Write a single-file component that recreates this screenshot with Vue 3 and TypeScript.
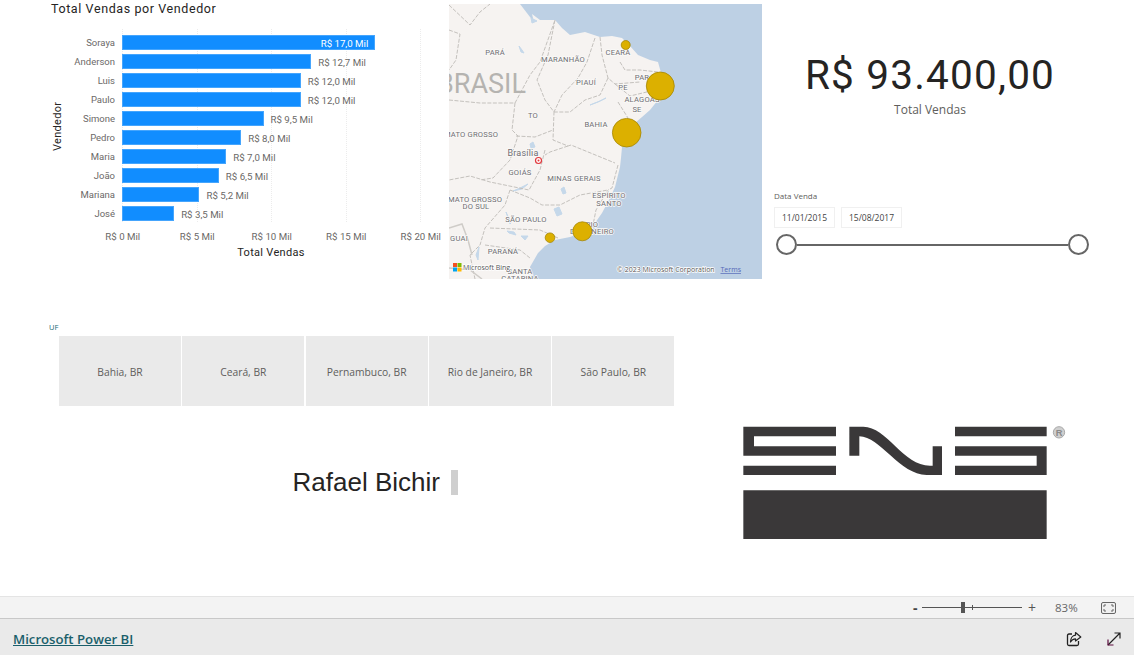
<script setup lang="ts">
interface Seller { name: string; value: number; label: string; inside?: boolean }
const sellers: Seller[] = [
  { name: 'Soraya', value: 17, label: 'R$ 17,0 Mil', inside: true },
  { name: 'Anderson', value: 12.7, label: 'R$ 12,7 Mil' },
  { name: 'Luis', value: 12, label: 'R$ 12,0 Mil' },
  { name: 'Paulo', value: 12, label: 'R$ 12,0 Mil' },
  { name: 'Simone', value: 9.5, label: 'R$ 9,5 Mil' },
  { name: 'Pedro', value: 8, label: 'R$ 8,0 Mil' },
  { name: 'Maria', value: 7, label: 'R$ 7,0 Mil' },
  { name: 'João', value: 6.5, label: 'R$ 6,5 Mil' },
  { name: 'Mariana', value: 5.2, label: 'R$ 5,2 Mil' },
  { name: 'José', value: 3.5, label: 'R$ 3,5 Mil' }
]
const ticks = ['R$ 0 Mil', 'R$ 5 Mil', 'R$ 10 Mil', 'R$ 15 Mil', 'R$ 20 Mil']
const states = ['Bahia, BR', 'Ceará, BR', 'Pernambuco, BR', 'Rio de Janeiro, BR', 'São Paulo, BR']
const mapLabels: { t: string; x: number; y: number; s?: number }[] = [
  { t: 'PARÁ', x: 495, y: 55 }, { t: 'MARANHÃO', x: 563, y: 62 }, { t: 'CEARÁ', x: 618, y: 55 },
  { t: 'PIAUÍ', x: 586, y: 85 }, { t: 'PAR', x: 642, y: 80 }, { t: 'PE', x: 623, y: 90 },
  { t: 'ALAGOAS', x: 642, y: 102 }, { t: 'SE', x: 637, y: 112 }, { t: 'TO', x: 533, y: 118 },
  { t: 'BAHIA', x: 596, y: 127 }, { t: 'MATO GROSSO', x: 471, y: 137 },
  { t: 'Brasília', x: 523, y: 156, s: 9 }, { t: 'GOIÁS', x: 520, y: 175 }, { t: 'MINAS GERAIS', x: 574, y: 181 },
  { t: 'ESPÍRITO', x: 609, y: 198 }, { t: 'SANTO', x: 609, y: 206 }, { t: 'MATO GROSSO', x: 475, y: 202 },
  { t: 'DO SUL', x: 476, y: 209 }, { t: 'SÃO PAULO', x: 526, y: 222 }, { t: 'RIO', x: 592, y: 227 },
  { t: 'DE JANEIRO', x: 592, y: 234 }, { t: 'GUAI', x: 459, y: 241 }, { t: 'PARANÁ', x: 503, y: 254 },
  { t: 'SANTA', x: 520, y: 274 }, { t: 'CATARINA', x: 520, y: 281 }
]
const borders = [
  'M449 100 L480 103 L515 103 L530 75 L540 62 L555 20',
  'M515 103 L512 130 L518 136 L510 160 L493 178 L480 180',
  'M555 20 L548 55 L537 80 L545 100 L554 112 L553 140 L568 146 L571 145 L615 163',
  'M595 38 L587 62 L578 78 L562 95 L554 112',
  'M600 37 L602 55 L608 78 L615 84 L640 82',
  'M608 78 L600 95 L585 100 L570 112 L554 112',
  'M615 84 L630 96 L655 90',
  'M620 62 L625 70 L640 70 L658 72',
  'M618 102 L628 118',
  'M516 136 L535 137 L553 130',
  'M545 150 L540 170 L529 190 L490 182 L470 176 L449 180',
  'M568 146 L550 152 L545 155',
  'M618 165 L612 188 L608 190 L596 210 L593 225',
  'M510 190 L530 198 L542 205 L560 205 L580 195 L608 190',
  'M510 190 L505 205 L485 228 L480 245 L470 255 L475 279',
  'M490 228 L540 230 L558 238',
  'M485 245 L520 250 L530 258',
  'M449 5 L470 25 L480 12 L490 4',
  'M449 30 L460 34 L456 60 L449 70'
]
const rivers = [
  'M519 46 L522 50 L524 53 L521 52 Z',
  'M590 105 L600 101 L606 98 L598 102 Z',
  'M530 144 L533 142 L535 147 L531 148 Z',
  'M513 191 L520 188 L528 184 L522 189 Z',
  'M561 189 L564 187 L566 193 L563 194 Z',
  'M554 209 L559 207 L562 214 L557 216 Z',
  'M506 212 L511 223 L510 224 Z',
  'M507 231 L514 232 L516 235 L509 233 Z',
  'M521 236 L528 236 L525 240 Z',
  'M476 255 L479 247 L478 260 Z',
  'M537 21 L532 23 L531 18 Z'
]
const bubbles = [
  { x: 625.7, y: 45, r: 4.5 },
  { x: 660.3, y: 86, r: 14 },
  { x: 626.7, y: 132.7, r: 14.3 },
  { x: 582.3, y: 231.3, r: 9.5 },
  { x: 550, y: 237.7, r: 4.8 }
]
</script>

<template>
  <div class="page">
    <main class="canvas">
      <section class="top">
        <div class="chart">
          <h2 class="chart-title">Total Vendas por Vendedor</h2>
          <div class="chart-body">
            <div class="y-title">Vendedor</div>
            <div class="plot">
              <div class="grid-lines">
                <i v-for="n in 5" :key="n" class="grid-line"></i>
              </div>
              <div v-for="s in sellers" :key="s.name" class="row">
                <span class="row-name">{{ s.name }}</span>
                <div class="bar" :style="{ width: s.value * 14.9 + 'px' }">
                  <span v-if="s.inside" class="val-in">{{ s.label }}</span>
                </div>
                <span v-if="!s.inside" class="val">{{ s.label }}</span>
              </div>
            </div>
          </div>
          <div class="x-axis"><span v-for="t in ticks" :key="t">{{ t }}</span></div>
          <div class="x-title">Total Vendas</div>
        </div>

        <div class="map">
          <svg width="313" height="275" viewBox="449 4 313 275">
            <rect x="449" y="4" width="313" height="275" fill="#bdd0e4" />
            <path d="M520 4 L530 17 L534 22 L532 14 L540 20 L555 20 L562 28 L570 35 L580 33 L585 32 L600 37 L612 36 L622 38 L630 46 L638 55 L650 60 L658 62 L663 80 L660 95 L658 100 L650 110 L642 117 L635 123 L628 135 L622 147 L621 158 L620 167 L615 187 L610 198 L602 213 L595 223 L582 233 L570 237 L555 240 L545 246 L538 253 L530 267 L532 279 L449 279 L449 4 Z" fill="#f6f3f1" />
            <path v-for="(d, i) in rivers" :key="'r' + i" :d="d" fill="#c5d8ea" stroke="#c5d8ea" stroke-width="1" />
            <path v-for="(d, i) in borders" :key="'b' + i" :d="d" fill="none" stroke="#c4c1bd" stroke-width="1" stroke-dasharray="4 1.5" />
            <path d="M449 228 L462 224 L468 240 L472 255 M449 268 L470 270 L482 279" fill="none" stroke="#cfccc8" stroke-width="1.5" />
            <text x="437" y="93" class="brasil">BRASIL</text>
            <text
              v-for="l in mapLabels"
              :key="l.t + l.x"
              :x="l.x"
              :y="l.y"
              :font-size="l.s || 7.6"
              text-anchor="middle"
              class="map-label"
            >{{ l.t }}</text>
            <circle cx="538.5" cy="160.5" r="3" fill="#fff" stroke="#e2383c" stroke-width="1.2" />
            <circle cx="538.5" cy="160.5" r="1" fill="#e2383c" />
            <circle v-for="(b, i) in bubbles" :key="'c' + i" :cx="b.x" :cy="b.y" :r="b.r" fill="#dcb000" stroke="#a58705" stroke-width="0.8" />
            <rect x="453" y="263" width="4" height="4" fill="#f25022" />
            <rect x="457.5" y="263" width="4" height="4" fill="#7fba00" />
            <rect x="453" y="267.5" width="4" height="4" fill="#00a4ef" />
            <rect x="457.5" y="267.5" width="4" height="4" fill="#ffb900" />
            <text x="463" y="270" class="attrib">Microsoft Bing</text>
            <text x="617" y="272" class="attrib">© 2023 Microsoft Corporation</text>
            <text x="720.5" y="272" class="terms">Terms</text>
          </svg>
        </div>

        <div class="side">
          <div class="kpi">
            <div class="kpi-value">R$ 93.400,00</div>
            <div class="kpi-label">Total Vendas</div>
          </div>
          <div class="slicer">
            <div class="slicer-title">Data Venda</div>
            <div class="dates">
              <span class="date">11/01/2015</span>
              <span class="date">15/08/2017</span>
            </div>
            <div class="slider">
              <span class="knob"></span>
              <span class="track"></span>
              <span class="knob"></span>
            </div>
          </div>
        </div>
      </section>

      <section class="bottom">
        <div class="left">
          <div class="uf">UF</div>
          <div class="tiles">
            <div v-for="s in states" :key="s" class="tile">{{ s }}</div>
          </div>
          <div class="author">
            <span class="author-name">Rafael Bichir</span>
            <span class="author-mark"></span>
          </div>
        </div>
        <div class="logo">
          <svg width="330" height="117" viewBox="30 25 990 351" role="img" aria-label="ENS">
            <path fill="#3a3839" d="M40 33H318V62H72V92H318V120H40ZM40 150H318V178H40ZM675 33H950V62H675ZM675 92H950V178H675V150H920V120H675ZM358 33H400C470 33 520 150 600 150H608V92H636V178H590C510 178 450 62 388 62V120H358ZM40 224H950V370H40Z" />
            <circle cx="987" cy="50" r="17" fill="#cfcfcf" stroke="#a9a9a9" stroke-width="3" />
            <text x="987" y="60" text-anchor="middle" class="reg">R</text>
          </svg>
        </div>
      </section>
    </main>

    <div class="status">
      <span class="zoom-sign minus">-</span>
      <div class="zoom-line"><i class="zoom-tick"></i><i class="zoom-thumb"></i></div>
      <span class="zoom-sign plus">+</span>
      <span class="pct">83%</span>
      <svg class="fit" width="15" height="12" viewBox="0 0 15 12">
        <rect x="0.5" y="0.5" width="14" height="11" rx="1.5" fill="#f0f0f0" stroke="#666" />
        <path d="M3 5V3H5M10 3H12V5M12 7V9H10M5 9H3V7" fill="none" stroke="#666" />
      </svg>
    </div>
    <footer class="footer">
      <a class="pbi-link" href="#">Microsoft Power BI</a>
      <svg class="share" width="16" height="16" viewBox="0 0 16 16">
        <path d="M6 3H3Q1.5 3 1.5 4.5V13Q1.5 14.5 3 14.5H11Q12.500 14.500 12.500 13V10" fill="none" stroke="#222" stroke-width="1.300" />
        <path d="M9.500 1.500L14.800 6L9.500 10V7.800C7 7.800 5.500 9 4.500 11C4.500 7.500 6.500 4.500 9.500 4.200Z" fill="none" stroke="#222" stroke-width="1.200" stroke-linejoin="round" />
      </svg>
      <svg class="expand" width="16" height="16" viewBox="0 0 16 16">
        <path d="M2 14L14 2M8.500 2H14V7.500" fill="none" stroke="#222" stroke-width="1.200" />
        <path d="M2 8.500V14H7.500" fill="none" stroke="#5a0a3c" stroke-width="1.200" />
      </svg>
    </footer>
  </div>
</template>

<style>
html, body { margin: 0; background: #fff; }
</style>

<style scoped>
.page {
  width: 1134px;
  height: 655px;
  display: flex;
  flex-direction: column;
  overflow: hidden;
  background: #fff;
  font-family: "Open Sans", "Liberation Sans", sans-serif;
}
.canvas { flex: none; height: 596px; overflow: hidden; }
.top { display: flex; height: 279px; }
.chart { width: 449px; box-sizing: border-box; padding-left: 51px; font-family: Roboto, "Liberation Sans", sans-serif; }
.chart-title {
  margin: 0;
  height: 28px;
  padding-top: 1px;
  font-size: 12.5px;
  line-height: 16px;
  font-weight: 400;
  letter-spacing: 0.6px;
  color: #252423;
}
.chart-body { display: flex; height: 193px; }
.y-title {
  width: 13px;
  writing-mode: vertical-rl;
  transform: rotate(180deg) translateY(-1px);
  text-align: center;
  height: 193px;
  font-size: 11px;
  font-weight: 400;
  letter-spacing: 0.3px;
  line-height: 13px;
  color: #252423;
}
.plot { position: relative; padding-top: 4px; }
.grid-lines { position: absolute; left: 58px; top: 0; bottom: 0; width: 299px; display: flex; justify-content: space-between; }
.grid-line { border-left: 1px dotted #ececec; }
.row { position: relative; display: flex; align-items: center; height: 19px; }
.row-name { width: 51px; margin-right: 7px; text-align: right; font-size: 9.5px; color: #6b6967; }
.bar { height: 15px; background: #118dff; box-sizing: border-box; border: 1px solid #45a5fd; display: flex; align-items: center; justify-content: flex-end; }
.val, .val-in { font-size: 9.7px; white-space: nowrap; padding-top: 2px; }
.val { margin-left: 7px; color: #6b6967; }
.val-in { margin-right: 6px; color: #fff; }
.x-axis { display: grid; grid-template-columns: repeat(5, 74.5px); margin-left: 34.500px; margin-top: 8px; }
.x-axis span { text-align: center; font-size: 9.7px; color: #6b6967; white-space: nowrap; line-height: 14px; }
.x-title { width: 440px; margin-left: -51px; text-align: center; padding-left: 102px; box-sizing: border-box; margin-top: 2px; font-size: 11px; font-weight: 400; letter-spacing: 0.3px; line-height: 14px; color: #252423; }
.map { width: 313px; height: 275px; margin-top: 4px; flex: none; }
.map svg { display: block; }
.brasil { font: 400 27px Roboto, "Liberation Sans", sans-serif; fill: #b5b3b0; }
.map-label { font-family: Roboto, "Liberation Sans", sans-serif; fill: #6f6d72; paint-order: stroke; stroke: #fafaf8; stroke-width: 1.5px; letter-spacing: 0.2px; }
.attrib { font: 7px "Open Sans", "Liberation Sans", sans-serif; fill: #555; paint-order: stroke; stroke: #fff; stroke-width: 1.500px; }
.terms { font: 7px "Open Sans", "Liberation Sans", sans-serif; fill: #5468b8; text-decoration: underline; }
.side { flex: 1; min-width: 0; }
.kpi { width: 336px; text-align: center; padding-top: 47px; }
.kpi-value { font: 400 40.5px/56px Roboto, "Liberation Sans", sans-serif; letter-spacing: 1.2px; color: #252423; white-space: nowrap; }
.kpi-label { font-size: 12px; line-height: 17px; margin-top: -2px; color: #605e5c; }
.slicer { padding: 72px 0 0 12px; }
.slicer-title { font-size: 8px; line-height: 11px; color: #605e5c; }
.dates { display: flex; gap: 6px; margin-top: 6px; }
.date {
  width: 61px;
  height: 21px;
  box-sizing: border-box;
  border: 1px solid #f0f0f0;
  text-align: center;
  font-size: 8.5px;
  line-height: 19px;
  color: #444;
}
.slider { display: flex; align-items: center; width: 313px; margin: 6px 0 0 2px; }
.knob { width: 21px; height: 21px; box-sizing: border-box; border: 2px solid #666; border-radius: 50%; background: #fff; flex: none; }
.track { flex: 1; height: 2px; background: #666; }
.bottom { display: flex; height: 317px; }
.left { width: 743px; flex: none; }
.uf { margin: 44px 0 0 49px; height: 13px; font-size: 7.5px; line-height: 9px; color: #1a6a72; }
.tiles { display: grid; grid-template-columns: repeat(5, 122px); column-gap: 1.350px; margin-left: 59px; }
.tile { height: 70px; padding-top: 1px; box-sizing: border-box; background: #eaeaea; display: flex; align-items: center; justify-content: center; font-size: 10.3px; color: #605e5c; white-space: nowrap; }
.author { display: flex; align-items: center; margin: 64px 0 0 292.500px; gap: 11px; height: 25px; }
.author-name { font: 400 26px/25px "Liberation Sans", Arial, sans-serif; color: #252423; white-space: nowrap; }
.author-mark { width: 7px; height: 25px; background: #cfcfcf; }
.logo { margin-top: 145px; margin-left: -3px; }
.logo svg { display: block; }
.reg { font: 700 28px "Liberation Sans", sans-serif; fill: #8a8a8a; }
.status {
  height: 23px;
  flex: none;
  box-sizing: border-box;
  display: flex;
  align-items: center;
  background: #f3f3f3;
  border-top: 1px solid #e4e4e4;
  border-bottom: 1px solid #c8c8c8;
  padding-left: 913px;
  color: #555;
}
.zoom-sign { font-size: 14px; line-height: 16px; color: #444; }
.minus { width: 9px; font-weight: 700; }
.zoom-line { position: relative; width: 100px; height: 1px; background: #555; }
.zoom-tick { position: absolute; left: 50px; top: -2px; width: 1px; height: 5px; background: #555; }
.zoom-thumb { position: absolute; left: 39px; top: -5px; width: 4px; height: 11px; background: #555; }
.plus { margin-left: 6px; width: 10px; color: #555; }
.pct { margin-left: 17px; width: 29px; font-size: 11.5px; color: #666; }
.fit { margin-left: 17px; }
.footer {
  flex: 1;
  min-height: 0;
  display: flex;
  align-items: center;
  background: #eaeaea;
  padding: 4px 12px 0 13px;
}
.pbi-link { font-size: 13.2px; font-weight: 600; color: #1a5f6b; text-decoration: underline; white-space: nowrap; margin-right: auto; }
.share { margin-right: 24px; }
</style>
